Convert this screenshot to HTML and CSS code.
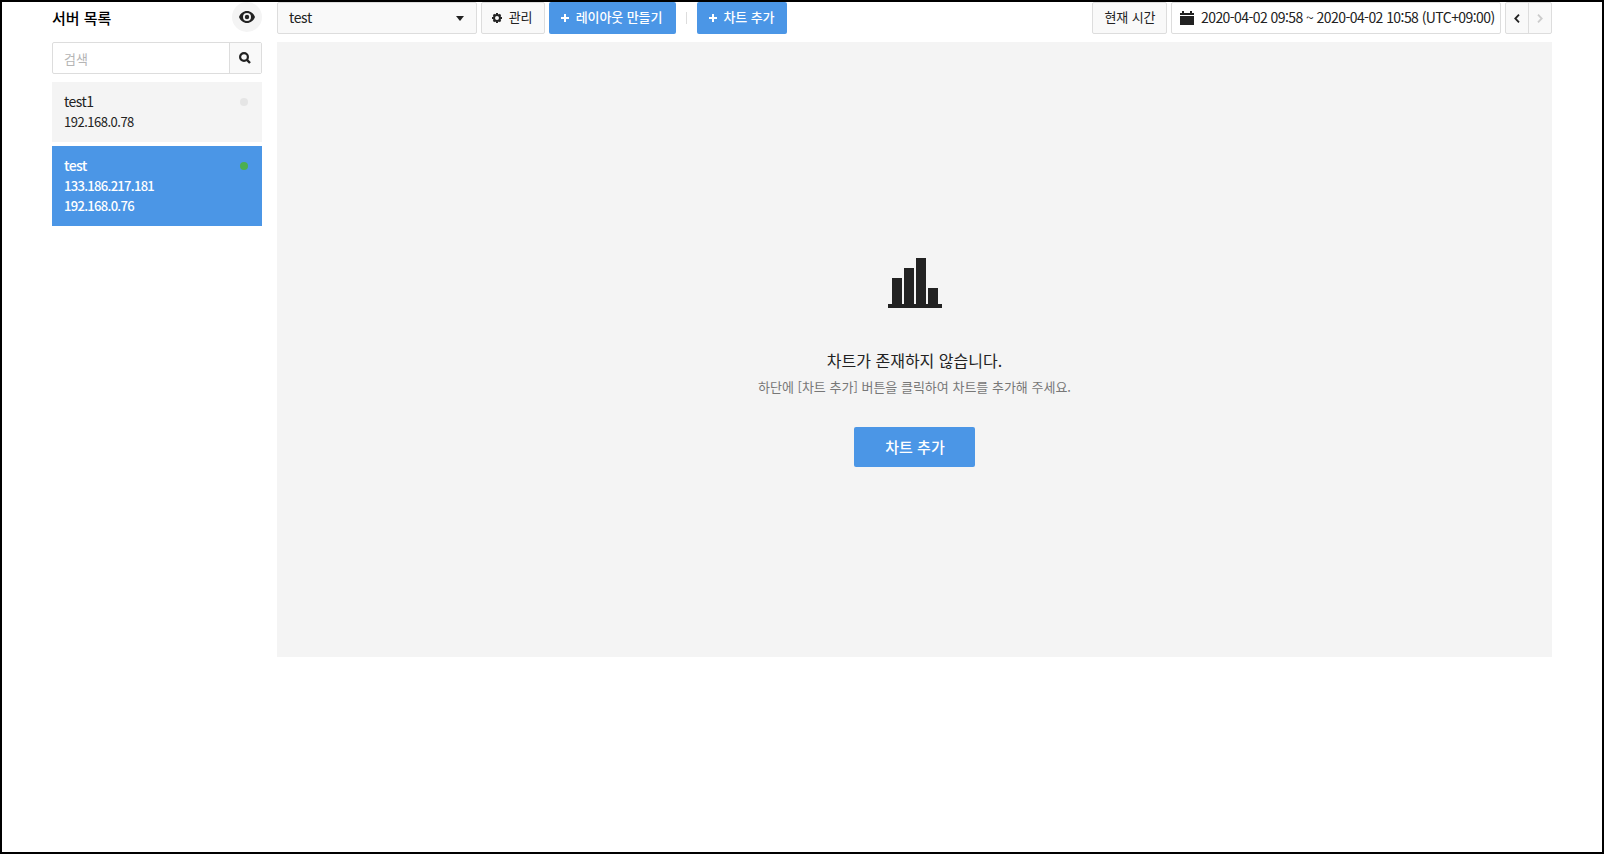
FILE: index.html
```html
<!DOCTYPE html>
<html lang="ko">
<head>
<meta charset="utf-8">
<title>서버 목록</title>
<link rel="stylesheet" href="styles.css">
</head>
<body>
<div class="app">
  <aside class="sidebar">
    <header class="sidebar-head">
      <h1 class="sidebar-title">서버 목록</h1>
      <button class="eye"><svg width="16" height="12" viewBox="0 0 16 12"><path fill="#222" fill-rule="evenodd" d="M8 0C4.400 0 1.300 2.400 0 6c1.300 3.600 4.400 6 8 6s6.700-2.400 8-6c-1.300-3.600-4.400-6-8-6zm0 10a4 4 0 1 1 0-8 4 4 0 0 1 0 8z"/><circle cx="8" cy="6" r="2.200" fill="#222"/></svg></button>
    </header>
    <div class="search">
      <span class="search-input">검색</span>
      <button class="search-btn"><svg width="12" height="12" viewBox="0 0 12 12" fill="none" stroke="#222"><circle cx="5" cy="5" r="3.900" stroke-width="2.200"/><path d="M7.700 7.700l3.300 3.300" stroke-width="2.400"/></svg></button>
    </div>
    <ul class="servers">
      <li class="server"><div class="name">test1</div><div class="ip">192.168.0.78</div><i class="dot"></i></li>
      <li class="server active"><div class="name">test</div><div class="ip">133.186.217.181</div><div class="ip">192.168.0.76</div><i class="dot"></i></li>
    </ul>
  </aside>
  <main class="main">
    <div class="toolbar">
      <div class="box select"><span class="latin">test</span><svg width="8" height="5" viewBox="0 0 8 5"><path d="M0 0h8L4 5z" fill="#222"/></svg></div>
      <button class="box manage"><svg width="10" height="10" viewBox="0 0 10 10"><circle cx="5" cy="5" r="3" fill="none" stroke="#222" stroke-width="2"/><path d="M4 0h2v1.500H4zM4 8.500h2V10H4zM0 4h1.500v2H0zM8.500 4H10v2H8.500zM.8 2.200L2.200.8l1 1-1.400 1.400zM7.800.8l1.400 1.400-1 1-1.400-1.400zM.8 7.800l1-1 1.400 1.400-1 1zM9.200 7.800l-1.400 1.400-1-1 1.400-1.400z" fill="#222"/></svg><span class="ko">관리</span></button>
      <button class="primary layout"><svg width="8" height="8" viewBox="0 0 8 8"><path d="M3 0h2v3h3v2H5v3H3V5H0V3h3z" fill="#fff"/></svg><span class="ko">레이아웃 만들기</span></button>
      <i class="sep"></i>
      <button class="primary add"><svg width="8" height="8" viewBox="0 0 8 8"><path d="M3 0h2v3h3v2H5v3H3V5H0V3h3z" fill="#fff"/></svg><span class="ko">차트 추가</span></button>
      <button class="box now"><span class="ko">현재 시간</span></button>
      <div class="box range"><svg width="14" height="14" viewBox="0 0 14 14"><path d="M0 2h2V0h2v2h6V0h2v2h2v2H0zM0 5h14v9H0z" fill="#222"/></svg><span class="latin">2020-04-02 09:58 ~ 2020-04-02 10:58 (UTC+09:00)</span></div>
      <div class="box pager">
        <button class="page"><svg width="6" height="9" viewBox="0 0 6 9"><path d="M5 .7L1.300 4.500 5 8.300" fill="none" stroke="#222" stroke-width="1.800"/></svg></button>
        <button class="page next"><svg width="6" height="9" viewBox="0 0 6 9"><path d="M1 .7l3.700 3.800L1 8.300" fill="none" stroke="#ccc" stroke-width="1.800"/></svg></button>
      </div>
    </div>
    <section class="empty">
      <svg class="chart" width="54" height="50" viewBox="0 0 54 50"><path d="M4 20h10v26h2V10h10v36h2V0h10v46h2V30h10v16h4v4H0v-4h4z" fill="#222"/></svg>
      <p class="empty-title">차트가 존재하지 않습니다.</p>
      <p class="empty-text">하단에 [차트 추가] 버튼을 클릭하여 차트를 추가해 주세요.</p>
      <button class="primary cta"><span>차트 추가</span></button>
    </section>
  </main>
</div>
</body>
</html>
```

FILE: styles.css
```css
* { box-sizing: border-box; }
body { margin: 0; font-family: "Noto Sans CJK KR", "Noto Sans", sans-serif; color: #222; background: #fff; }
h1, p, ul { margin: 0; padding: 0; list-style: none; }
button { font: inherit; color: inherit; border: 0; padding: 0; background: none; display: flex; align-items: center; justify-content: center; }
svg { display: block; flex: none; }
.app { height: 854px; border: 2px solid #000; display: flex; gap: 15px; padding: 0 50px; overflow: hidden; }
.sidebar { width: 210px; flex: none; }
.sidebar-head { height: 40px; display: flex; justify-content: space-between; align-items: flex-start; }
.sidebar-title { font-size: 15px; font-weight: 500; line-height: 31px; color: #000; }
.eye { width: 30px; height: 30px; border-radius: 50%; background: #f4f4f4; }
.search { height: 32px; display: flex; border: 1px solid #ddd; border-radius: 2px; }
.search-input { flex: 1; padding-left: 11px; font-size: 13px; line-height: 31px; color: #b5b5b5; }
.search-btn { width: 32px; padding-right: 1px; border-left: 1px solid #ddd; background: #f9f9f9; }
.servers { margin-top: 8px; display: flex; flex-direction: column; gap: 4px; }
.server { position: relative; background: #f4f4f4; padding: 9px 12px 11px; line-height: 20px; }
.name { font-size: 14px; letter-spacing: -.5px; margin-bottom: 1px; }
.ip { font-size: 13px; letter-spacing: -.5px; }
.ip:last-of-type { margin-bottom: -1px; }
.active { background: #4b96e6; color: #fff; font-weight: 500; }
.active .name { letter-spacing: -.6px; }
.active .ip { letter-spacing: -.7px; }
.dot { position: absolute; right: 14px; top: 16px; width: 8px; height: 8px; border-radius: 50%; background: #e5e5e5; }
.active .dot { background: #4caf50; }
.main { flex: 1; min-width: 0; }
.toolbar { height: 32px; display: flex; gap: 4px; white-space: nowrap; }
.box { height: 32px; border: 1px solid #ddd; border-radius: 2px; background: #f9f9f9; display: flex; align-items: center; }
.latin { font-size: 14px; line-height: 20px; letter-spacing: -.57px; padding-bottom: 2px; }
.ko { font-size: 13px; line-height: 20px; letter-spacing: -.1px; padding-bottom: 2px; }
.select { width: 200px; justify-content: space-between; padding: 0 12px 0 11px; }
.select .latin { letter-spacing: -.35px; }
.manage { width: 64px; gap: 7px; padding-right: 2px; }
.primary { height: 32px; background: #4b96e6; color: #fff; font-weight: 500; border-radius: 2px; gap: 7px; }
.layout { width: 127px; padding-right: 2px; }
.add { width: 90px; padding-right: 1px; }
.sep { width: 1px; height: 12px; margin: 10px 6px 0; background: #ddd; }
.now { width: 75px; margin-left: auto; padding-left: 1px; }
.range { width: 330px; background: #fff; padding-left: 8px; gap: 7px; }
.pager { width: 47px; }
.page { flex: 1; height: 30px; }
.next { border-left: 1px solid #ddd; }
.empty { margin-top: 8px; height: 615px; background: #f4f4f4; display: flex; flex-direction: column; align-items: center; padding-top: 216px; }
.empty-title { margin-top: 40px; font-size: 16px; line-height: 24px; }
.empty-text { margin-top: 5px; font-size: 13px; line-height: 20px; color: #777; }
.cta { width: 121px; height: 40px; margin-top: 30px; padding: 0 0 2px 1px; font-size: 15px; }
```
